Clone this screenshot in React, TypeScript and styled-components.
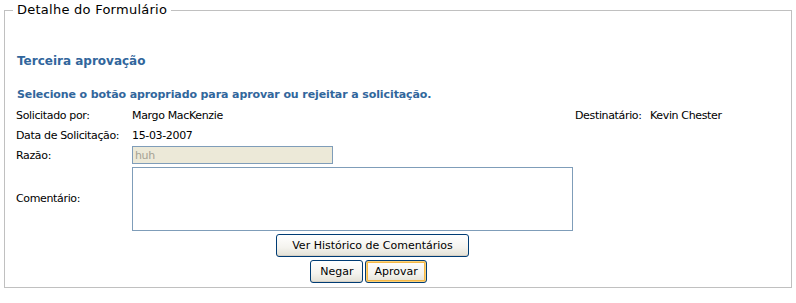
import styled, { createGlobalStyle } from 'styled-components';

const GlobalStyle = createGlobalStyle`
    html, body {
        margin: 0;
        padding: 0;
        background: #ffffff;
    }
    body {
        font-family: 'DejaVu Sans', Verdana, sans-serif;
        font-size: 11px;
        color: #000000;
    }
`;

const Page = styled.div`
    padding: 2px 4px 0 4px;
    width: 788px;
`;

const Fieldset = styled.fieldset`
    margin: 0;
    padding: 0 0 4px 11px;
    border: 1px solid #c0c0c0;
    border-radius: 0;
    height: 286px;
    box-sizing: border-box;
`;

const Legend = styled.legend`
    margin-left: -3px;
    padding: 0 4px;
    font-size: 13px;
    letter-spacing: 0.25px;
    color: #000000;
    line-height: 16px;
`;

const Title = styled.h2`
    margin: 35px 0 0 1px;
    font-size: 12px;
    font-weight: bold;
    color: #31669c;
    line-height: 16px;
`;

const Instruction = styled.p`
    margin: 19px 0 0 1px;
    font-size: 11px;
    font-weight: bold;
    color: #31669c;
    line-height: 14px;
    letter-spacing: -0.1px;
`;

const Grid = styled.div`
    display: grid;
    grid-template-columns: 116px 443px 75px auto;
    width: 715px;
    margin: 3px 0 0 0;
    letter-spacing: -0.35px;
`;

const Label = styled.div<{ $tall?: boolean }>`
    display: flex;
    align-items: center;
    height: ${props => (props.$tall ? '66px' : '20px')};
`;

const Value = styled.div<{ $span?: number }>`
    display: flex;
    align-items: center;
    height: 20px;
    grid-column: span ${props => props.$span ?? 1};
`;

const TextField = styled.input`
    box-sizing: border-box;
    width: 201px;
    height: 18px;
    margin: 0;
    padding: 0 2px;
    border: 1px solid #7f9db9;
    background: #ece9d8;
    color: #a5a294;
    font-family: 'DejaVu Sans', Verdana, sans-serif;
    font-size: 11px;
    letter-spacing: -0.35px;
`;

const TextArea = styled.textarea`
    box-sizing: border-box;
    width: 441px;
    height: 64px;
    margin: 2px 0 0 0;
    padding: 2px;
    border: 1px solid #7f9db9;
    background: #ffffff;
    resize: none;
    grid-column: span 3;
    font-family: 'DejaVu Sans', Verdana, sans-serif;
    font-size: 11px;
`;

const ButtonRow = styled.div<{ $offset?: number }>`
    display: flex;
    justify-content: center;
    gap: 2px;
    width: 715px;
    margin-left: ${props => props.$offset ?? 0}px;
`;

const FirstRow = styled(ButtonRow)`
    margin-top: 3px;
`;

const SecondRow = styled(ButtonRow)`
    margin-top: 3px;
`;

const Button = styled.button<{ $focused?: boolean }>`
    height: 23px;
    padding: 0 ${props => (props.$focused ? '8px' : '9px')};
    border: 1px solid #003c74;
    border-radius: 3px;
    background: linear-gradient(#ffffff 0%, #f4f3ee 60%, #e3e1d6 100%);
    box-shadow: ${props =>
        props.$focused
            ? 'inset 0 0 0 1px #fbd27c, inset 0 0 0 2px #f4b846'
            : 'inset 0 -1px 0 #d6d0c5'};
    font-family: 'DejaVu Sans', Verdana, sans-serif;
    font-size: 11px;
    letter-spacing: 0;
    color: #000000;
    cursor: pointer;
`;

const WideButton = styled(Button)`
    padding: 0 15px;
`;

export default function App() {
    return (
        <>
            <GlobalStyle />
            <Page>
                <Fieldset>
                    <Legend>Detalhe do Formulário</Legend>
                    <Title>Terceira aprovação</Title>
                    <Instruction>Selecione o botão apropriado para aprovar ou rejeitar a solicitação.</Instruction>
                    <Grid>
                        <Label>Solicitado por:</Label>
                        <Value>Margo MacKenzie</Value>
                        <Label>Destinatário:</Label>
                        <Value>Kevin Chester</Value>

                        <Label>Data de Solicitação:</Label>
                        <Value $span={3}>15-03-2007</Value>

                        <Label>Razão:</Label>
                        <Value $span={3}>
                            <TextField value="huh" readOnly />
                        </Value>

                        <Label $tall>Comentário:</Label>
                        <TextArea />
                    </Grid>
                    <FirstRow $offset={-1}>
                        <WideButton>Ver Histórico de Comentários</WideButton>
                    </FirstRow>
                    <SecondRow $offset={-5}>
                        <Button>Negar</Button>
                        <Button $focused>Aprovar</Button>
                    </SecondRow>
                </Fieldset>
            </Page>
        </>
    );
}
